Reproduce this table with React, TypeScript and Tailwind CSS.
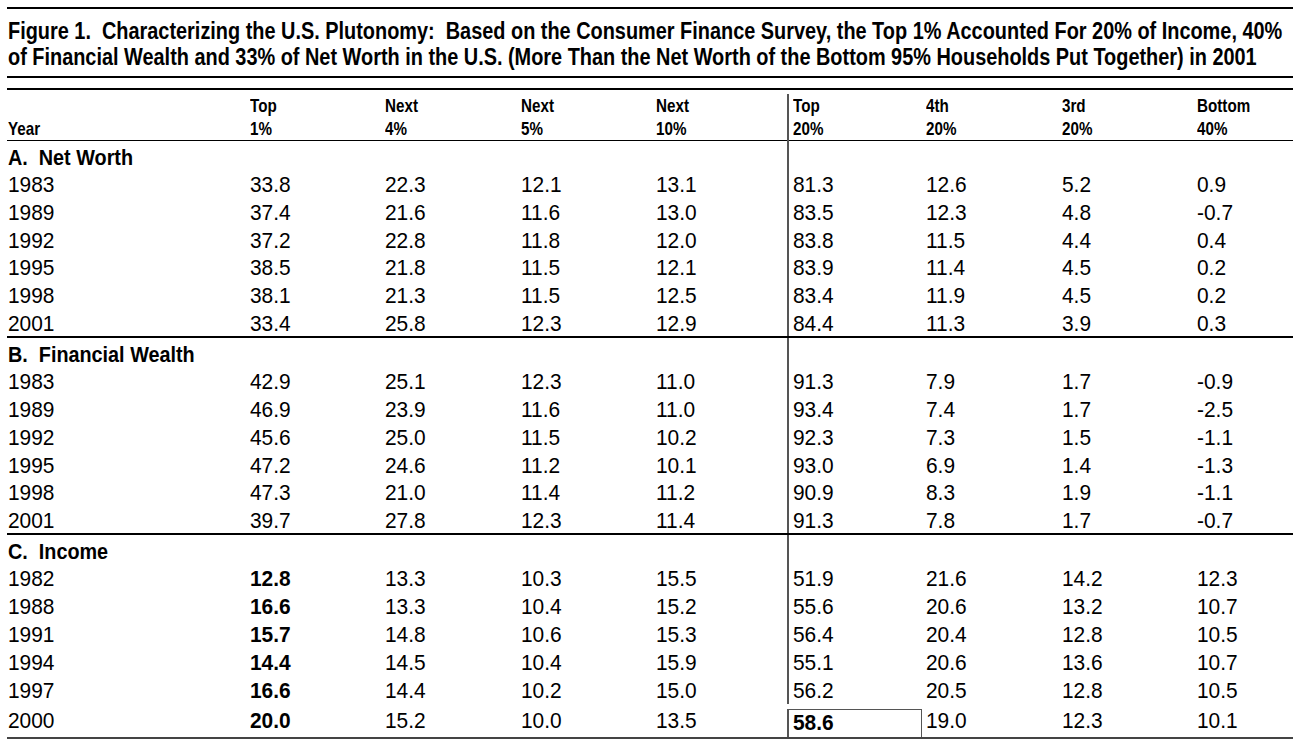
import React from "react";

type Row = { year: string; v: string[] };
type Section = { title: string; rows: Row[]; boldTop?: boolean };

const sections: Section[] = [
  {
    title: "A.  Net Worth",
    rows: [
      { year: "1983", v: ["33.8", "22.3", "12.1", "13.1", "81.3", "12.6", "5.2", "0.9"] },
      { year: "1989", v: ["37.4", "21.6", "11.6", "13.0", "83.5", "12.3", "4.8", "-0.7"] },
      { year: "1992", v: ["37.2", "22.8", "11.8", "12.0", "83.8", "11.5", "4.4", "0.4"] },
      { year: "1995", v: ["38.5", "21.8", "11.5", "12.1", "83.9", "11.4", "4.5", "0.2"] },
      { year: "1998", v: ["38.1", "21.3", "11.5", "12.5", "83.4", "11.9", "4.5", "0.2"] },
      { year: "2001", v: ["33.4", "25.8", "12.3", "12.9", "84.4", "11.3", "3.9", "0.3"] },
    ],
  },
  {
    title: "B.  Financial Wealth",
    rows: [
      { year: "1983", v: ["42.9", "25.1", "12.3", "11.0", "91.3", "7.9", "1.7", "-0.9"] },
      { year: "1989", v: ["46.9", "23.9", "11.6", "11.0", "93.4", "7.4", "1.7", "-2.5"] },
      { year: "1992", v: ["45.6", "25.0", "11.5", "10.2", "92.3", "7.3", "1.5", "-1.1"] },
      { year: "1995", v: ["47.2", "24.6", "11.2", "10.1", "93.0", "6.9", "1.4", "-1.3"] },
      { year: "1998", v: ["47.3", "21.0", "11.4", "11.2", "90.9", "8.3", "1.9", "-1.1"] },
      { year: "2001", v: ["39.7", "27.8", "12.3", "11.4", "91.3", "7.8", "1.7", "-0.7"] },
    ],
  },
  {
    title: "C.  Income",
    boldTop: true,
    rows: [
      { year: "1982", v: ["12.8", "13.3", "10.3", "15.5", "51.9", "21.6", "14.2", "12.3"] },
      { year: "1988", v: ["16.6", "13.3", "10.4", "15.2", "55.6", "20.6", "13.2", "10.7"] },
      { year: "1991", v: ["15.7", "14.8", "10.6", "15.3", "56.4", "20.4", "12.8", "10.5"] },
      { year: "1994", v: ["14.4", "14.5", "10.4", "15.9", "55.1", "20.6", "13.6", "10.7"] },
      { year: "1997", v: ["16.6", "14.4", "10.2", "15.0", "56.2", "20.5", "12.8", "10.5"] },
      { year: "2000", v: ["20.0", "15.2", "10.0", "13.5", "58.6", "19.0", "12.3", "10.1"] },
    ],
  },
];

const heads = [
  ["Top", "1%"],
  ["Next", "4%"],
  ["Next", "5%"],
  ["Next", "10%"],
  ["Top", "20%"],
  ["4th", "20%"],
  ["3rd", "20%"],
  ["Bottom", "40%"],
];

const grid = "grid grid-cols-[239px_repeat(7,135.3px)_1fr]";

// the source uses a condensed Helvetica, so squeeze Liberation Sans a bit
function Narrow({ children, k = "title" }: { children: React.ReactNode; k?: "title" | "head" | "section" | "data" }) {
  const cls =
    k === "title"
      ? "scale-x-[0.865]"
      : k === "head"
        ? "scale-x-[0.8]"
        : k === "section"
          ? "scale-x-[0.9]"
          : "scale-x-[0.95]";
  return <span className={`inline-block origin-left whitespace-pre ${cls}`}>{children}</span>;
}

export default function App() {
  return (
    <div className="w-[1300px] h-[745px] overflow-hidden bg-white text-black px-[7px] pt-[7px] font-['Liberation_Sans',Arial,sans-serif]">
      <div className="border-t-2 border-black" />
      <div className="h-[67px] overflow-hidden pl-[1px] pt-[9px] text-[23px] font-bold leading-[26px] whitespace-nowrap">
        <div>
          <Narrow>
            Figure 1.  Characterizing the U.S. Plutonomy:  Based on the Consumer Finance Survey, the Top 1% Accounted For 20% of Income, 40%
          </Narrow>
        </div>
        <div>
          <Narrow>
            of Financial Wealth and 33% of Net Worth in the U.S. (More Than the Net Worth of the Bottom 95% Households Put Together) in 2001
          </Narrow>
        </div>
      </div>
      <div className="border-t-2 border-black" />
      <div className="h-[10px]" />
      <div className="border-t-2 border-black" />

      {/* header */}
      <div className={`${grid} h-[51px] border-b border-black text-[19px] font-bold leading-[23px]`}>
        <div className="flex items-end pl-[1px] pb-[4px]">
          <Narrow k="head">Year</Narrow>
        </div>
        {heads.map((h, i) => (
          <div
            key={i}
            className={`flex flex-col justify-end pb-[4px] pl-[4px] ${i === 4 ? "border-l-2 border-[#555] mt-[4px]" : ""}`}
          >
            <Narrow k="head">{h[0]}</Narrow>
            <Narrow k="head">{h[1]}</Narrow>
          </div>
        ))}
      </div>

      {sections.map((s, si) => {
        const last = si === sections.length - 1;
        return (
          <div key={s.title} className={last ? "" : "border-b-2 border-black"}>
            <div className={`${grid} h-[29px]`}>
              <div className="flex items-center pl-[1px] text-[22px] font-bold">
                <Narrow k="section">{s.title}</Narrow>
              </div>
              {heads.map((_, i) => (
                <div key={i} className={i === 4 ? "border-l-2 border-[#555]" : ""} />
              ))}
            </div>
            {s.rows.map((r, ri) => {
              const lastRow = last && ri === s.rows.length - 1;
              return (
                <div
                  key={r.year}
                  className={`${grid} text-[22px] leading-none ${
                    last ? (lastRow ? "h-[33px] grid-rows-[33px]" : "h-[28px] grid-rows-[28px]") : "h-[27.7px] grid-rows-[27.7px]"
                  }`}
                >
                  <div className={`flex items-center pl-[1px] ${last ? "pt-[1px]" : "pt-[3px]"}`}>
                    <Narrow k="data">{r.year}</Narrow>
                  </div>
                  {r.v.map((v, i) => {
                    const bold = (s.boldTop && i === 0) || (lastRow && i === 4);
                    const boxed = lastRow && i === 4;
                    return (
                      <div
                        key={i}
                        className={`flex items-center pl-[4px] ${bold ? "font-bold" : ""} ${
                          i === 4 ? "border-l-2 border-[#555]" : ""
                        } ${
                          boxed
                            ? "border-t border-r border-[#333] mt-[5px] pb-[2px]"
                            : last
                              ? "pt-[1px]"
                              : "pt-[3px]"
                        }`}
                      >
                        <Narrow k="data">{v}</Narrow>
                      </div>
                    );
                  })}
                </div>
              );
            })}
          </div>
        );
      })}
      <div className="border-t-2 border-[#444]" />
    </div>
  );
}
